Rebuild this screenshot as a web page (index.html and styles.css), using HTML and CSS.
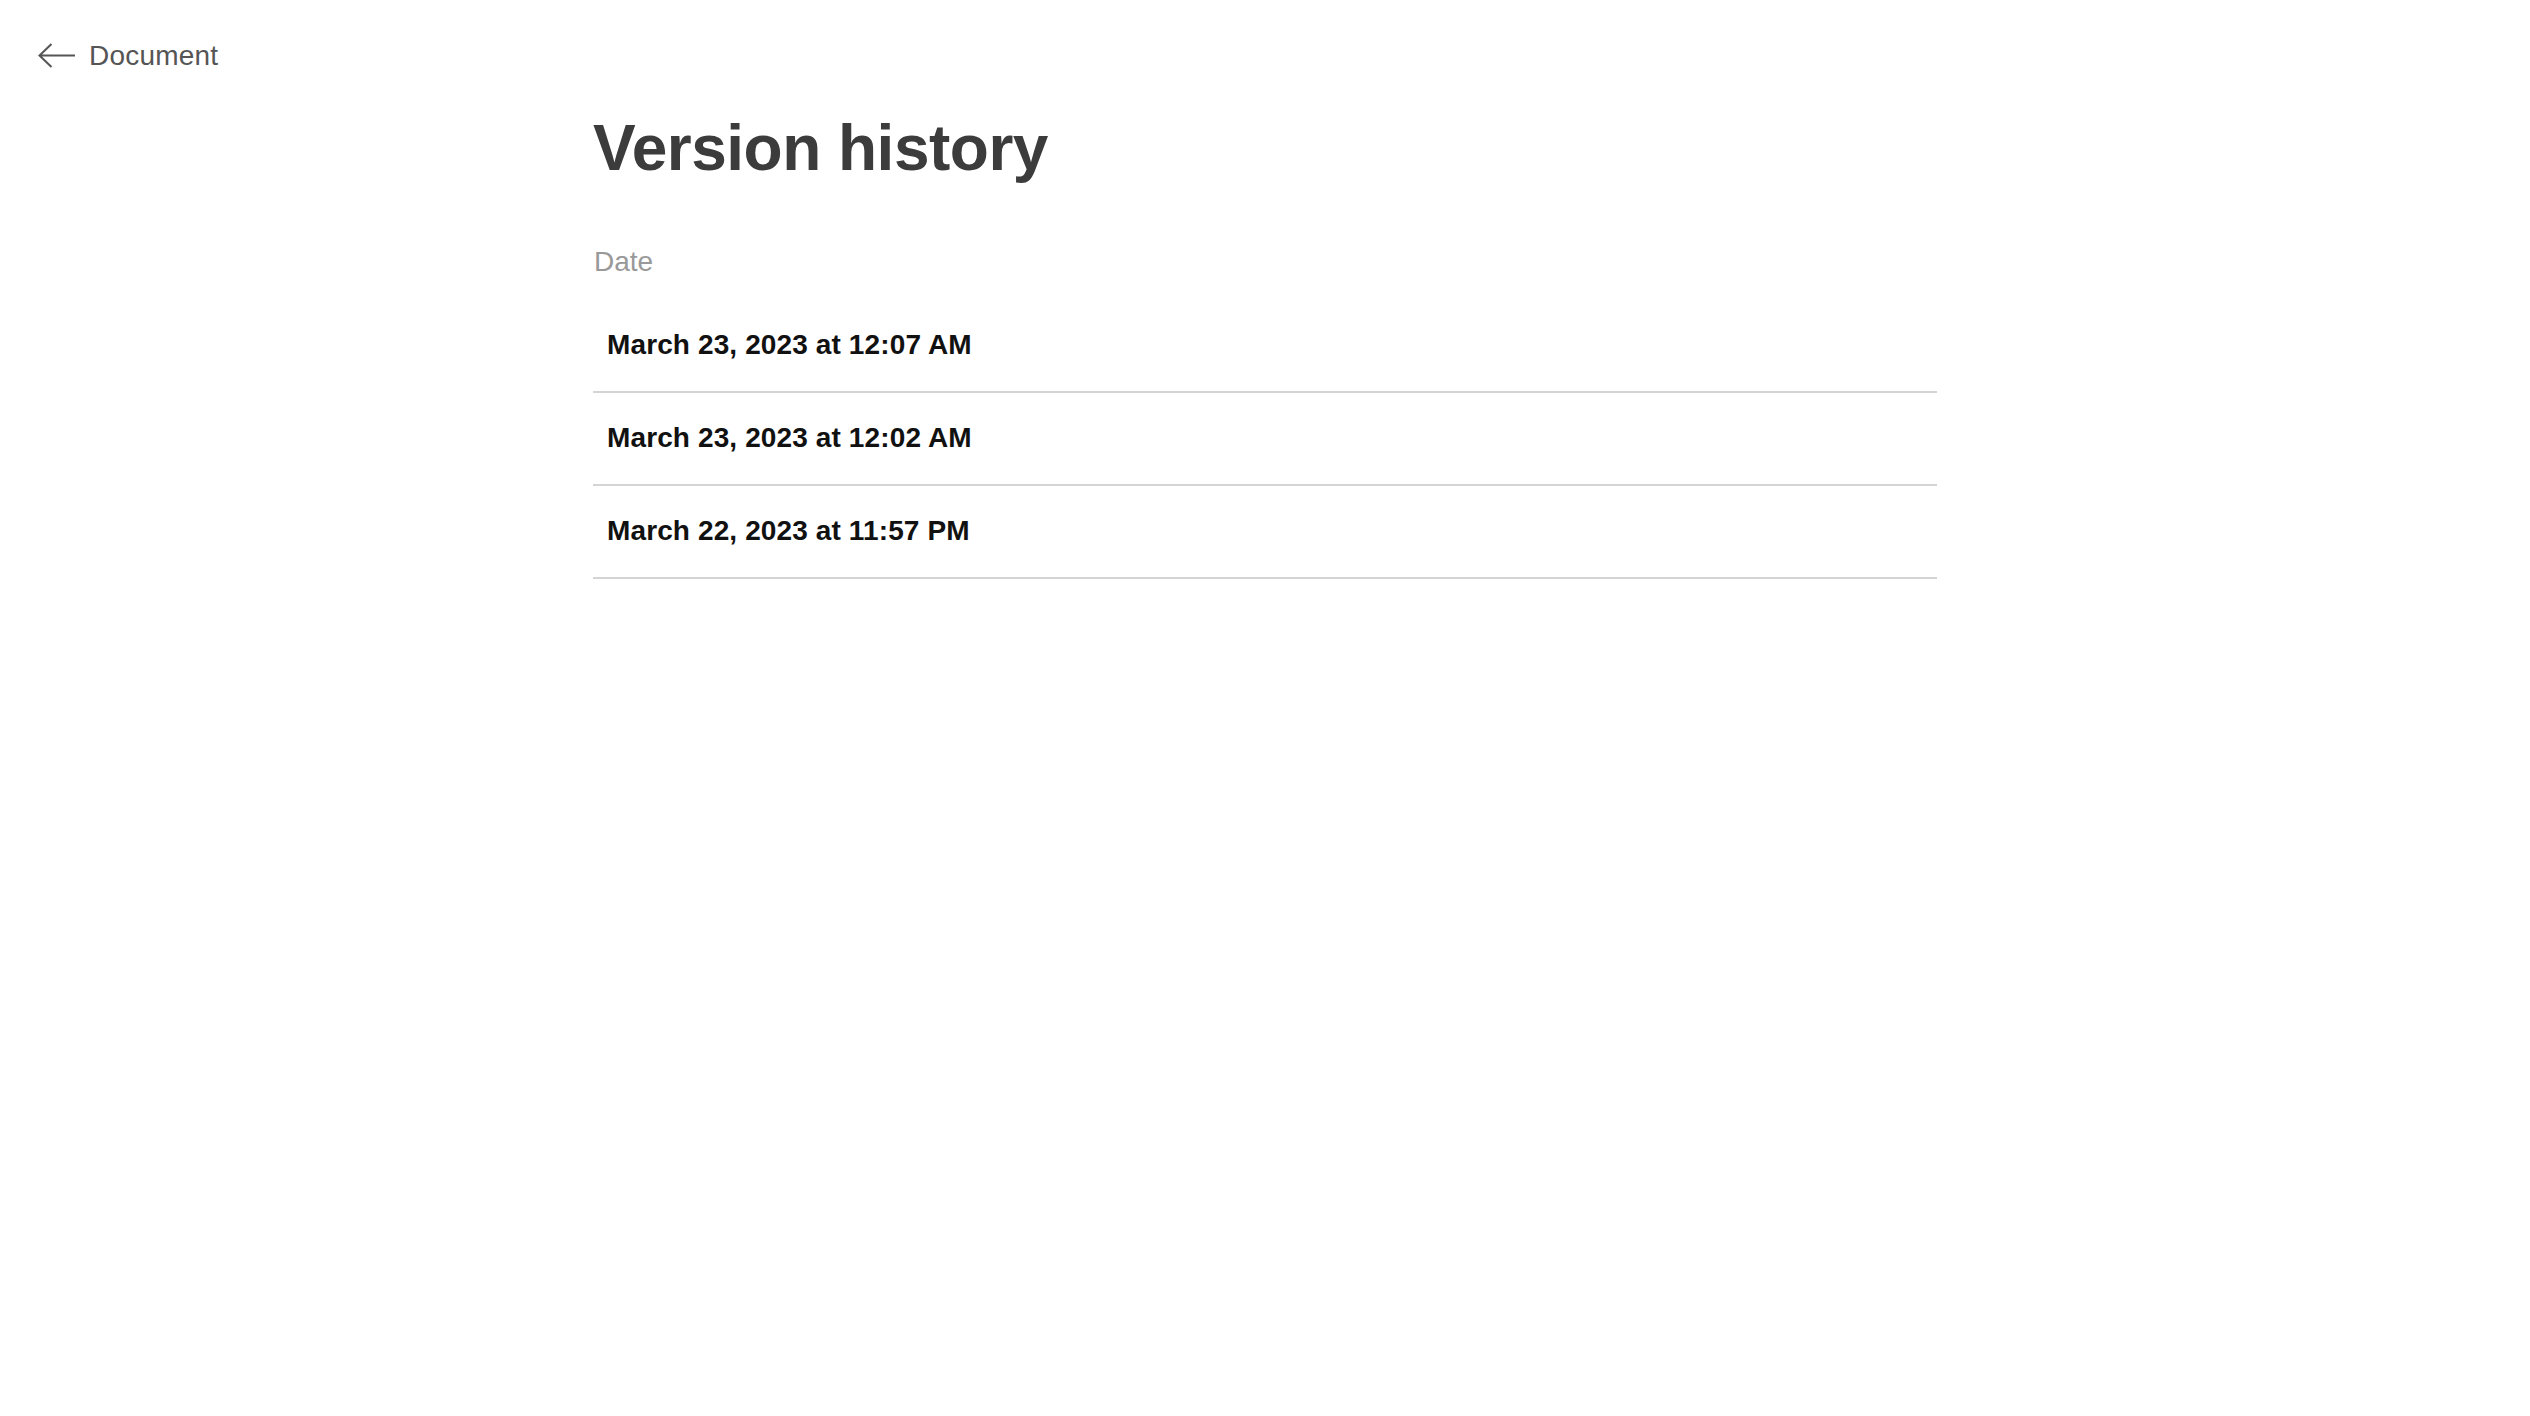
FILE: index.html
```html
<!DOCTYPE html>
<html lang="en">
<head>
    <meta charset="UTF-8">
    <meta name="viewport" content="width=device-width, initial-scale=1.0">
    <title>Version history</title>
    <link rel="stylesheet" href="styles.css">
</head>
<body>

<!-- Back link to the document -->
<div id="topbar">
    <a class="back-link" href="#">
        <svg class="back-icon" width="38" height="26" viewBox="0 0 38 26">
            <path d="M37 12.5 H1.5 M13.5 1 L1.5 12.5 L13.5 24" fill="none" stroke="#555" stroke-width="2"/>
        </svg>
        <span>Document</span>
    </a>
</div>

<!-- Main list of saved versions -->
<div id="content">
    <h1 class="page-title">Version history</h1>

    <div class="col-head">Date</div>
    <ul id="versionList">
        <li>March 23, 2023 at 12:07 AM</li>
        <li>March 23, 2023 at 12:02 AM</li>
        <li>March 22, 2023 at 11:57 PM</li>
    </ul>
</div>

</body>
</html>
```

FILE: styles.css
```css
body {
    font-family: "Liberation Sans", Arial, sans-serif;
    margin: 0;
    padding: 0;
    background-color: #fff;
}
#topbar {
    padding: 40px 0 0 38px;
}
.back-link {
    display: flex;
    align-items: center;
    gap: 13px;
    color: #555;
    text-decoration: none;
    font-size: 28px;
    line-height: 32px;
    letter-spacing: 0.2px;
    width: max-content;
}
.back-icon {
    display: block;
}
#content {
    width: 1344px;
    margin: 0 auto;
}
.page-title {
    margin: 38px 0 0;
    font-size: 64px;
    line-height: 76px;
    font-weight: bold;
    letter-spacing: -0.5px;
    color: #3c3c3c;
}
.col-head {
    margin-top: 60px;
    font-size: 28px;
    line-height: 32px;
    color: #999;
    padding-left: 1px;
}
#versionList {
    list-style: none;
    margin: 22px 0 0;
    padding: 0;
}
#versionList li {
    padding: 29px 14px 30px;
    font-size: 28px;
    line-height: 32px;
    font-weight: bold;
    letter-spacing: 0.12px;
    color: #111;
    border-bottom: 2px solid #d4d4d4;
    cursor: pointer;
}
```
